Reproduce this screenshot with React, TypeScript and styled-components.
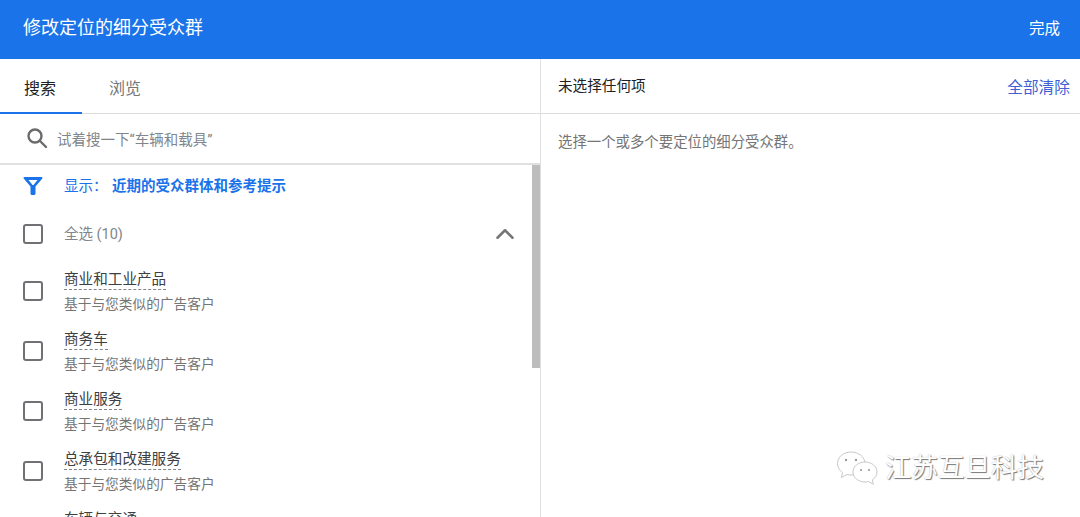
import styled, { createGlobalStyle } from 'styled-components';
import { ChevronUp } from 'lucide-react';

const GlobalStyle = createGlobalStyle`
  html, body {
    margin: 0;
    padding: 0;
    background: #fff;
    overflow: hidden;
  }
  * {
    box-sizing: border-box;
  }
  body {
    font-family: Roboto, "Noto Sans CJK SC", sans-serif;
  }
`;

const Page = styled.div`
  position: relative;
  width: 1080px;
  height: 517px;
  overflow: hidden;
  display: flex;
  flex-direction: column;
`;

const Header = styled.header`
  flex: none;
  height: 59px;
  display: flex;
  align-items: center;
  justify-content: space-between;
  padding: 0 20px 8px 23px;
  background: #1a73e8;
  color: #fff;
`;

const Title = styled.div`
  font-size: 18px;
`;

const DoneButton = styled.div`
  margin-top: 3px;
  font-size: 15.5px;
`;

const Body = styled.div`
  flex: 1;
  min-height: 0;
  display: flex;
`;

const LeftPane = styled.section`
  width: 541px;
  flex: none;
  display: flex;
  flex-direction: column;
  border-right: 1px solid #e0e0e0;
`;

const Tabs = styled.div`
  flex: none;
  height: 55px;
  display: flex;
  border-bottom: 1px solid #dadce0;
`;

const Tab = styled.div<{ $active?: boolean }>`
  width: 82px;
  height: 55px;
  padding: 3px 0 0 24px;
  margin-right: ${p => (p.$active ? '3px' : '0')};
  display: flex;
  align-items: center;
  font-size: 16px;
  color: ${p => (p.$active ? '#202124' : '#757575')};
  border-bottom: 2px solid ${p => (p.$active ? '#1a73e8' : 'transparent')};
`;

const SearchRow = styled.div`
  flex: none;
  height: 51px;
  display: flex;
  align-items: center;
  gap: 9px;
  padding: 0 0 0 26px;
  font-size: 14.5px;
  color: #80868b;
  border-bottom: 2px solid #e0e0e0;
`;

const SearchIcon = styled.svg`
  flex: none;
  width: 22px;
  height: 22px;
  margin-bottom: 2px;
  fill: none;
  stroke: #6b6b6b;
  stroke-width: 2.4;
  stroke-linecap: round;
`;

const ListArea = styled.div`
  position: relative;
  flex: 1;
  min-height: 0;
  overflow: hidden;
  padding-left: 23px;
`;

const ScrollThumb = styled.div`
  position: absolute;
  top: 0;
  right: 0;
  width: 8px;
  height: 203px;
  background: #bdbdbd;
`;

const FilterRow = styled.div`
  height: 38px;
  display: flex;
  align-items: center;
  font-size: 14.5px;
  color: #1a73e8;
`;

const FilterIcon = styled.svg`
  flex: none;
  width: 20px;
  height: 20px;
  margin: 4px 21px 0 0;
  fill: #1a73e8;
`;

const FilterLabel = styled.span`
  width: 48px;
`;

const FilterValue = styled.span`
  font-weight: 700;
`;

const SelectAllRow = styled.div`
  height: 58px;
  display: flex;
  align-items: center;
  padding: 4px 20px 0 0;
  font-size: 14.5px;
  color: #80868b;
`;

const SelectAllLabel = styled.span`
  flex: 1;
  margin-bottom: 4px;
`;

const Chevron = styled(ChevronUp)`
  color: #757575;
`;

const Checkbox = styled.div`
  flex: none;
  width: 20px;
  height: 20px;
  margin-right: 21px;
  border: 2.5px solid #6f7175;
  border-radius: 3px;
`;

const Item = styled.div`
  height: 60px;
  display: flex;
  align-items: center;
`;

const ItemText = styled.div`
  display: flex;
  flex-direction: column;
  align-items: flex-start;
`;

const ItemTitle = styled.span`
  font-size: 14.6px;
  line-height: 20px;
  color: #3c4043;
  border-bottom: 1px dashed #80868b;
`;

const ItemHint = styled.span`
  margin-top: 5px;
  font-size: 13.7px;
  line-height: 18px;
  color: #757575;
`;

const RightPane = styled.section`
  flex: 1;
  display: flex;
  flex-direction: column;
`;

const SelectionBar = styled.div`
  flex: none;
  height: 55px;
  display: flex;
  align-items: center;
  justify-content: space-between;
  padding: 0 10px 2px 17px;
  border-bottom: 1px solid #dadce0;
`;

const SelectionCount = styled.span`
  margin-bottom: 2px;
  font-size: 14.6px;
  color: #202124;
`;

const ClearAll = styled.span`
  margin-top: 2px;
  font-size: 15.7px;
  color: #3f5fd4;
`;

const EmptyHint = styled.div`
  padding: 19px 0 0 17px;
  font-size: 14.4px;
  line-height: 20px;
  color: #757575;
`;

const Watermark = styled.div`
  position: absolute;
  left: 836px;
  top: 450px;
  display: flex;
  align-items: center;
  gap: 5px;
  font-size: 26.5px;
  line-height: 36px;
  color: #fff;
  text-shadow: 1px 1px 1px #777, 0 0 1px #aaa;
`;

const WechatIcon = styled.svg`
  width: 44px;
  height: 36px;
  fill: #fff;
  stroke: #c8c8c8;
  stroke-width: 1;
`;

const items = ['商业和工业产品', '商务车', '商业服务', '总承包和改建服务', '车辆与交通'];

const App = () => (
  <Page>
    <GlobalStyle />
    <Header>
      <Title>修改定位的细分受众群</Title>
      <DoneButton>完成</DoneButton>
    </Header>
    <Body>
      <LeftPane>
        <Tabs>
          <Tab $active>搜索</Tab>
          <Tab>浏览</Tab>
        </Tabs>
        <SearchRow>
          <SearchIcon viewBox="0 0 22 22">
            <circle cx="9" cy="9" r="6.500" />
            <path d="M14 14l6 6" />
          </SearchIcon>
          试着搜一下“车辆和载具”
        </SearchRow>
        <ListArea>
          <ScrollThumb />
          <FilterRow>
            <FilterIcon viewBox="0 0 20 20">
              <path d="M1.500 1h17a1 1 0 0 1 .8 1.600L12.500 10.500V17.500a1.500 1.500 0 0 1-1.500 1.500H9a1.500 1.500 0 0 1-1.500-1.500v-7L.7 2.600A1 1 0 0 1 1.500 1zM5.500 4l4 5h1l4-5z" fillRule="evenodd" />
            </FilterIcon>
            <FilterLabel>显示：</FilterLabel>
            <FilterValue>近期的受众群体和参考提示</FilterValue>
          </FilterRow>
          <SelectAllRow>
            <Checkbox />
            <SelectAllLabel>全选 (10)</SelectAllLabel>
            <Chevron size={30} strokeWidth={2} />
          </SelectAllRow>
          {items.map(title => (
            <Item key={title}>
              <Checkbox />
              <ItemText>
                <ItemTitle>{title}</ItemTitle>
                <ItemHint>基于与您类似的广告客户</ItemHint>
              </ItemText>
            </Item>
          ))}
        </ListArea>
      </LeftPane>
      <RightPane>
        <SelectionBar>
          <SelectionCount>未选择任何项</SelectionCount>
          <ClearAll>全部清除</ClearAll>
        </SelectionBar>
        <EmptyHint>选择一个或多个要定位的细分受众群。</EmptyHint>
      </RightPane>
    </Body>
    <Watermark>
      <WechatIcon viewBox="0 0 44 36">
        <path d="M15 2C7.500 2 1.500 7 1.500 13.500c0 3.800 2 6.800 5 9l-1 5 5.500-3c1.300.3 2.700.5 4 .5 8 0 14-5 14-11.500S22.500 2 15 2z" />
        <path d="M29 12c-6.600 0-12 4.300-12 10s5.400 10 12 10c1.200 0 2.400-.2 3.500-.5l4.800 2.800-.9-4.500c2.800-1.800 4.600-4.600 4.600-7.800 0-5.700-5.400-10-12-10z" />
        <circle cx="10" cy="10" r="1.200" fill="#999" stroke="none" />
        <circle cx="20" cy="10" r="1.200" fill="#999" stroke="none" />
        <circle cx="25" cy="20" r="1.100" fill="#999" stroke="none" />
        <circle cx="33" cy="20" r="1.100" fill="#999" stroke="none" />
      </WechatIcon>
      江苏互旦科技
    </Watermark>
  </Page>
);

export default App;
